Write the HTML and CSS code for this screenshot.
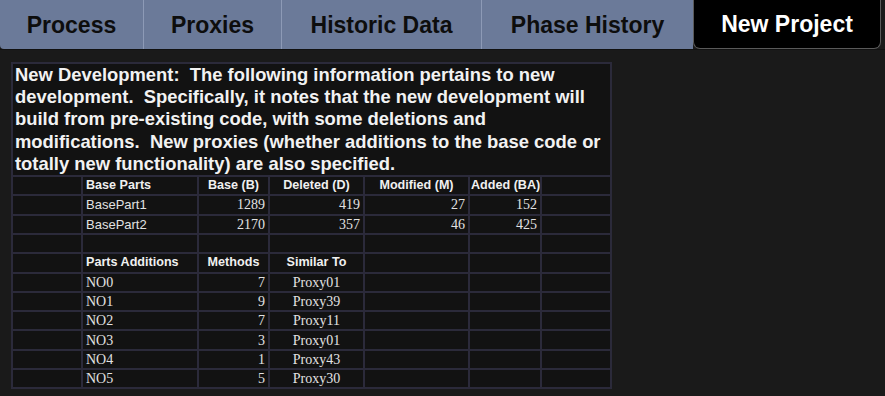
FILE: index.html
```html
<!DOCTYPE html>
<html>
<head>
<meta charset="utf-8">
<link rel="stylesheet" href="styles.css">
</head>
<body>
<div class="tabs">
  <div class="tab t1">Process</div>
  <div class="tab t2">Proxies</div>
  <div class="tab t3">Historic Data</div>
  <div class="tab t4">Phase History</div>
  <div class="tab t5 active">New Project</div>
</div>
<div class="content">
<table class="grid">
  <colgroup>
    <col class="c1"><col class="c2"><col class="c3"><col class="c4"><col class="c5"><col class="c6"><col class="c7">
  </colgroup>
  <tr><td colspan="7" class="intro">New Development:&nbsp; The following information pertains to new development.&nbsp; Specifically, it notes that the new development will build from pre-existing code, with some deletions and modifications.&nbsp; New proxies (whether additions to the base code or totally new functionality) are also specified.</td></tr>
  <tr class="hd"><td></td><td class="l">Base Parts</td><td>Base (B)</td><td>Deleted (D)</td><td>Modified (M)</td><td>Added (BA)</td><td></td></tr>
  <tr><td></td><td class="sans">BasePart1</td><td class="num">1289</td><td class="num">419</td><td class="num">27</td><td class="num">152</td><td></td></tr>
  <tr><td></td><td class="sans">BasePart2</td><td class="num">2170</td><td class="num">357</td><td class="num">46</td><td class="num">425</td><td></td></tr>
  <tr><td></td><td></td><td></td><td></td><td></td><td></td><td></td></tr>
  <tr class="hd"><td></td><td class="l">Parts Additions</td><td>Methods</td><td>Similar To</td><td></td><td></td><td></td></tr>
  <tr><td></td><td>NO0</td><td class="num">7</td><td class="ctr">Proxy01</td><td></td><td></td><td></td></tr>
  <tr><td></td><td>NO1</td><td class="num">9</td><td class="ctr">Proxy39</td><td></td><td></td><td></td></tr>
  <tr><td></td><td>NO2</td><td class="num">7</td><td class="ctr">Proxy11</td><td></td><td></td><td></td></tr>
  <tr><td></td><td>NO3</td><td class="num">3</td><td class="ctr">Proxy01</td><td></td><td></td><td></td></tr>
  <tr><td></td><td>NO4</td><td class="num">1</td><td class="ctr">Proxy43</td><td></td><td></td><td></td></tr>
  <tr><td></td><td>NO5</td><td class="num">5</td><td class="ctr">Proxy30</td><td></td><td></td><td></td></tr>
</table>
</div>
</body>
</html>
```
FILE: styles.css
```css
html, body {
  margin: 0;
  padding: 0;
  background: #1a1a1a;
  width: 885px;
  height: 396px;
  overflow: hidden;
}
.tabs {
  display: flex;
  height: 49px;
  border-bottom: 1px solid #111;
  background: #1a1a1a;
}
.tab {
  box-sizing: border-box;
  height: 49px;
  background: #6b7a99;
  color: #0d0d0d;
  font-family: "Liberation Sans", Arial, sans-serif;
  font-weight: bold;
  font-size: 23px;
  display: flex;
  align-items: center;
  justify-content: center;
  padding-top: 2px;
  border-right: 1px solid #8d9ab6;
}
.t1 { width: 144px; border-bottom-left-radius: 4px; }
.t2 { width: 138px; }
.t3 { width: 200px; }
.t4 { width: 211px; border-right: none; }
.t5 { width: 188px; }
.tab.active {
  background: #000;
  color: #fff;
  border: 1px solid #5a5a5a;
  border-top: none;
  border-radius: 0 0 7px 7px;
  padding-top: 1px;
}
.content {
  padding: 12px 0 0 11px;
}
.grid {
  border-collapse: collapse;
  table-layout: fixed;
  width: 601px;
  background: #121212;
  border: 2px solid #2b2a3a;
}
.c1 { width: 70px; }
.c2 { width: 116px; }
.c3 { width: 71px; }
.c4 { width: 95px; }
.c5 { width: 105px; }
.c6 { width: 72px; }
.c7 { width: 70px; }
.grid td {
  border: 2px solid #2b2a3a;
  height: 17.3px;
  padding: 0 3px;
  color: #e2e2e2;
  font-family: "Liberation Serif", "Times New Roman", serif;
  font-size: 14px;
  line-height: 17px;
  white-space: nowrap;
  overflow: hidden;
}
.grid td.intro {
  font-family: "Liberation Sans", Arial, sans-serif;
  font-weight: bold;
  font-size: 18.4px;
  line-height: 22.2px;
  color: #f2f2f2;
  white-space: normal;
  padding: 0 2px 0 2px;
  height: auto;
}
.grid tr.hd td {
  font-family: "Liberation Sans", Arial, sans-serif;
  font-weight: bold;
  font-size: 12.6px;
  text-align: center;
  color: #f0f0f0;
  padding: 0 1px;
}
.grid tr.hd td.l { text-align: left; padding-left: 3px; }
.grid td.sans {
  font-family: "Liberation Sans", Arial, sans-serif;
  font-size: 13px;
}
.grid td.num { text-align: right; }
.grid td.ctr { text-align: center; }
```
